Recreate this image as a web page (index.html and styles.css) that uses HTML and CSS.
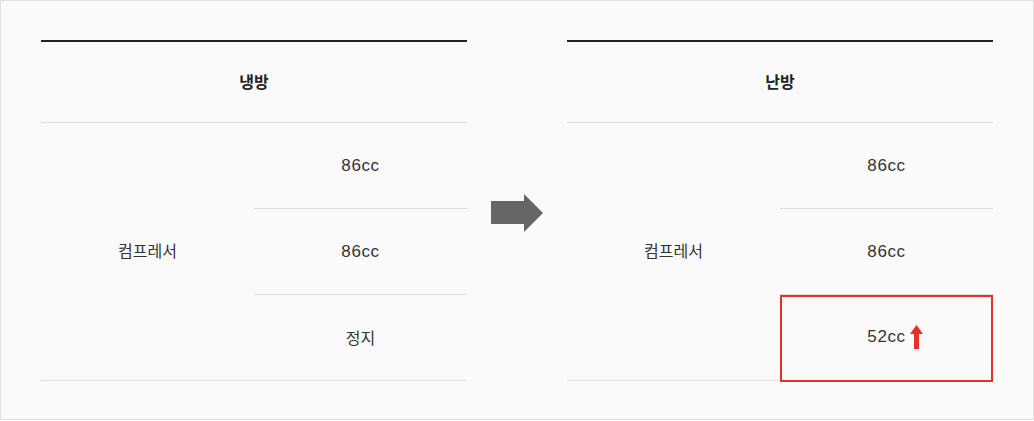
FILE: index.html
```html
<!DOCTYPE html>
<html lang="ko">
<head>
<meta charset="utf-8">
<link rel="stylesheet" href="styles.css">
</head>
<body>
<div class="frame">
  <div class="spec">
    <div class="head">냉방</div>
    <div class="label">컴프레서</div>
    <div class="val"><span class="num">86cc</span></div>
    <div class="val"><span class="num">86cc</span></div>
    <div class="val last">정지</div>
  </div>
  <svg class="arrow" width="52" height="38" viewBox="0 0 52 38">
    <polygon points="0,7 33,7 33,0 52,19 33,38 33,30 0,30" fill="#666"/>
  </svg>
  <div class="spec">
    <div class="head">난방</div>
    <div class="label">컴프레서</div>
    <div class="val"><span class="num">86cc</span></div>
    <div class="val"><span class="num">86cc</span></div>
    <div class="val last changed"><span class="num">52cc<svg class="up" width="13" height="24" viewBox="0 0 13 24"><polygon points="6.5,0 13,9 9,9 9,24 4,24 4,9 0,9" fill="#e8302a"/></svg></span></div>
  </div>
</div>
</body>
</html>
```
FILE: styles.css
```css
html, body {
  margin: 0;
  padding: 0;
  background: #fff;
}
body {
  font-family: "Liberation Sans", "Noto Sans CJK KR", sans-serif;
  color: #333;
}
.frame {
  box-sizing: border-box;
  width: 1034px;
  height: 420px;
  border: 1px solid #e0e0e0;
  background: #fafafa;
  padding: 39px 40px 0 40px;
  display: flex;
  align-items: flex-start;
}
.spec {
  flex: 1;
  display: grid;
  grid-template-columns: 1fr 1fr;
  grid-template-rows: 81px 86px 86px 85px;
  border-top: 2px solid #222;
  border-bottom: 1px solid #ddd;
}
.head {
  grid-column: 1 / 3;
  border-bottom: 1px solid #ddd;
  display: flex;
  align-items: center;
  justify-content: center;
  font-weight: bold;
  font-size: 16px;
  color: #222;
  padding-bottom: 2px;
}
.label {
  grid-column: 1;
  grid-row: 2 / 5;
  display: flex;
  align-items: center;
  justify-content: center;
  font-size: 16px;
  padding-bottom: 3px;
}
.val {
  grid-column: 2;
  border-bottom: 1px solid #ddd;
  display: flex;
  align-items: center;
  justify-content: center;
  font-size: 16px;
  position: relative;
}
.val.last {
  border-bottom: none;
  padding-bottom: 1px;
}
.num {
  font-size: 17px;
  letter-spacing: 0.6px;
  position: relative;
}
.changed::after {
  content: "";
  position: absolute;
  left: 0;
  right: 0;
  top: 0;
  bottom: -2px;
  border: 2px solid #e8302a;
}
.up {
  position: absolute;
  left: 100%;
  top: 50%;
  margin-left: 4px;
  margin-top: -12px;
}
.arrow {
  flex: none;
  margin: 154px 24px 0 24px;
}
```
